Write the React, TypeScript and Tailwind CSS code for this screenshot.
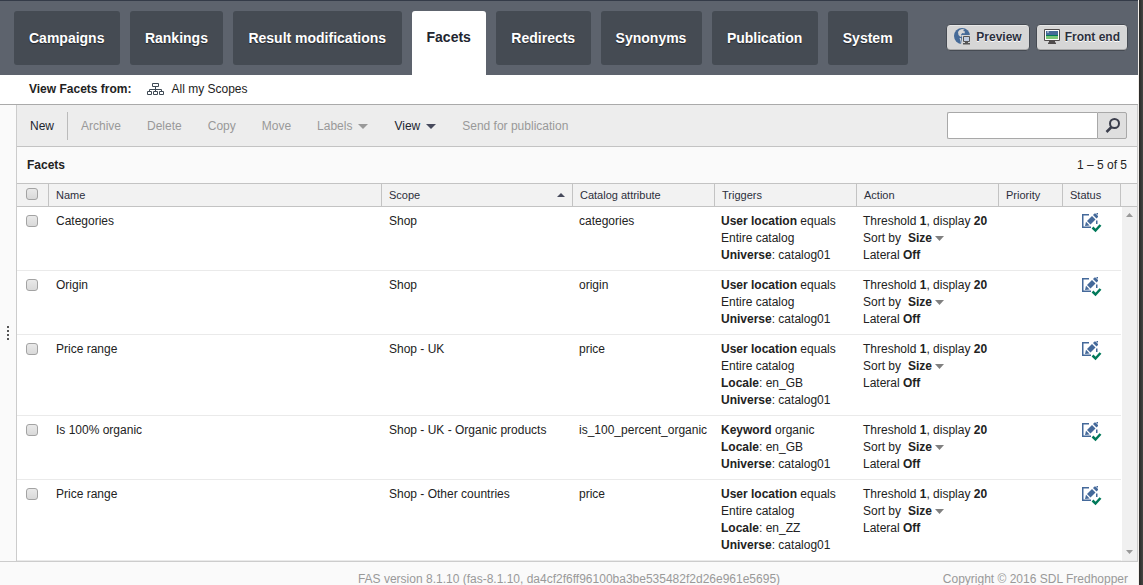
import React from "react";

const tabs = [
  "Campaigns",
  "Rankings",
  "Result modifications",
  "Facets",
  "Redirects",
  "Synonyms",
  "Publication",
  "System",
];

type Trigger = { bold?: string; text: string };
type Facet = { name: string; scope: string; attribute: string; triggers: Trigger[] };

const location: Trigger[] = [{ bold: "User location", text: " equals" }, { text: "Entire catalog" }];
const universe: Trigger = { bold: "Universe", text: ": catalog01" };

const facets: Facet[] = [
  { name: "Categories", scope: "Shop", attribute: "categories", triggers: [...location, universe] },
  { name: "Origin", scope: "Shop", attribute: "origin", triggers: [...location, universe] },
  {
    name: "Price range",
    scope: "Shop - UK",
    attribute: "price",
    triggers: [...location, { bold: "Locale", text: ": en_GB" }, universe],
  },
  {
    name: "Is 100% organic",
    scope: "Shop - UK - Organic products",
    attribute: "is_100_percent_organic",
    triggers: [{ bold: "Keyword", text: " organic" }, { bold: "Locale", text: ": en_GB" }, universe],
  },
  {
    name: "Price range",
    scope: "Shop - Other countries",
    attribute: "price",
    triggers: [...location, { bold: "Locale", text: ": en_ZZ" }, universe],
  },
];

function Triangle({ className, up = false }: { className: string; up?: boolean }) {
  return (
    <svg viewBox="0 0 10 5" preserveAspectRatio="none" className={className} aria-hidden="true">
      <path d={up ? "M0 5 5 0l5 5z" : "M0 0h10L5 5z"} fill="currentColor" />
    </svg>
  );
}

function ScopeIcon() {
  return (
    <svg width="17" height="13" viewBox="0 0 17 13" fill="none" stroke="#3f4a55" aria-hidden="true">
      <path d="M5.5.5h6v3h-6zM.5 8.5h4v3h-4zM6.500 8.500h4v3h-4zM12.500 8.500h4v3h-4zM8.500 4v4M2.500 8V6.500h12V8" />
    </svg>
  );
}

function PreviewIcon() {
  return (
    <svg width="17" height="17" viewBox="0 0 17 17" className="mb-0.5" aria-hidden="true">
      <circle cx="8" cy="8" r="8" fill="#456a98" />
      <path d="M4 4 5.500 2 8 1l2.500.5L9 3l2 .5-.5 2L8.500 5 7 6.500 8 8 6.500 9 4.500 7z" fill="#d6d6d6" />
      <path d="M8 7h9v10H8z" fill="#d6d6d6" />
      <path d="M7 10H5.500l1 3 .5 3h1z" fill="#d6d6d6" />
      <path d="M9.500 8.500h6v5h-6z" fill="#bfcde2" stroke="#555" />
      <path d="M11 14h3v1h2v1.500H9V15h2z" fill="#555" />
    </svg>
  );
}

function MonitorIcon() {
  return (
    <svg width="16" height="16" viewBox="0 0 16 16" className="mb-0.5" aria-hidden="true">
      <path d="M.5.5h15v11H.5z" fill="#fff" stroke="#4f4b4b" />
      <path d="M2 2h12v4H2z" fill="#456a98" />
      <path d="M3 2.500h2v1H3z" fill="#dfe6ee" />
      <path d="M2 6h12v1H2z" fill="#00795a" />
      <path d="M2 7h12v3H2z" fill="#7cc576" />
      <path d="M5 12h6v1.500h1V15H4v-1.500h1z" fill="#4f4b4b" />
    </svg>
  );
}

function StatusIcon() {
  return (
    <svg width="20" height="20" viewBox="0 0 20 20" role="img" aria-label="Modified and published">
      <g fill="#44699a">
        <path d="M0 1h7v1.500H1.500v11H9V15H0z" />
        <path d="m5 8 5-5 3.500 3.500-5 5z" />
        <path d="M11 2 12.500.5h1L16 3v1l-1.500 1.500z" />
        <path d="m3 13 1-4.200 3.700 3.700z" />
        <path d="M14 7.500h1.500V11H14zM14.500 0H16v1.500h-1.500z" />
      </g>
      <path d="m10.500 14.500 3 3 5-5.500" fill="none" stroke="#00795a" strokeWidth="2.500" />
    </svg>
  );
}

function Checkbox({ label }: { label: string }) {
  return (
    <input
      type="checkbox"
      aria-label={label}
      className="block size-3 appearance-none rounded-[3px] border border-[#a3a3a3] bg-linear-to-b from-[#e9e9e9] to-[#d9d9d9] checked:bg-[#456a98]"
    />
  );
}

function ToolButton({ children, active = false }: { children: React.ReactNode; active?: boolean }) {
  return (
    <button
      type="button"
      className={
        active
          ? "flex items-center gap-1.5 px-[13px] pt-0.5 text-[#22252f]"
          : "flex items-center gap-1.5 px-[13px] pt-0.5 text-[#999]"
      }
    >
      {children}
    </button>
  );
}

function HeaderButton({ children }: { children: React.ReactNode }) {
  return (
    <button
      type="button"
      className="flex h-[27px] items-center gap-[5px] rounded-[4px] border border-[#464b53] bg-[#d6d6d6] px-[7px] font-bold text-[#2b2f3c] shadow-[inset_0_1px_0_#e8e8e8,inset_0_-1px_0_#aaa] [text-shadow:0_1px_0_#fff]"
    >
      {children}
    </button>
  );
}

const th = "border-r border-[#c3c3c3] px-[7px] text-left font-normal";
const td = "border-b border-[#eaeaea] py-1.5 align-top";

export default function App() {
  return (
    <div className="flex min-h-screen bg-[#fafafa] font-['Liberation_Sans',Arial,sans-serif] text-[12px] leading-[17px] text-[#222]">
      <div className="flex min-w-0 flex-1 flex-col">
        <header className="flex h-[75px] justify-between border-t border-[#343b48] bg-[#5d636d] pt-2.5 pr-2.5 pl-3.5">
          <nav className="flex w-[894px] items-start gap-2.5 text-[14px] font-bold">
            {tabs.map((tab) =>
              tab === "Facets" ? (
                <a key={tab} href="#facets" aria-current="page" className="flex grow items-center self-stretch rounded-t-[3px] bg-white px-[15px] pb-3 text-[#22252f]">
                  {tab}
                </a>
              ) : (
                <a key={tab} href={"#" + tab.toLowerCase()} className="flex h-[54px] grow items-center rounded-[3px] bg-[#454b53] px-[15px] whitespace-nowrap text-white [text-shadow:0_1px_1px_#22252b]">
                  {tab}
                </a>
              ),
            )}
          </nav>
          <div className="flex items-start gap-1.5 pt-[13px] whitespace-nowrap">
            <HeaderButton>
              <PreviewIcon />
              Preview
            </HeaderButton>
            <HeaderButton>
              <MonitorIcon />
              Front end
            </HeaderButton>
          </div>
        </header>

        <div className="flex h-[30px] items-center gap-4 border-b border-[#aaa] bg-white pl-[29px]">
          <strong>View Facets from:</strong>
          <a href="#scopes" className="flex items-center gap-[7px]">
            <ScopeIcon />
            All my Scopes
          </a>
        </div>

        <div className="flex flex-1">
          <aside className="flex w-[17px] flex-col items-center justify-center gap-0.5 border-r border-[#ccc]">
            <span className="size-0.5 bg-[#555]" />
            <span className="size-0.5 bg-[#555]" />
            <span className="size-0.5 bg-[#555]" />
            <span className="size-0.5 bg-[#555]" />
          </aside>

          <main className="flex min-w-0 flex-1 flex-col border-r border-[#ccc]">
            <div className="flex h-[42px] items-center justify-between border-b border-[#c3c3c3] bg-[#ededed] pr-2.5">
              <div className="flex items-center">
                <div className="flex h-7 items-center border-r border-[#bbb]">
                  <ToolButton active>New</ToolButton>
                </div>
                <ToolButton>Archive</ToolButton>
                <ToolButton>Delete</ToolButton>
                <ToolButton>Copy</ToolButton>
                <ToolButton>Move</ToolButton>
                <ToolButton>
                  Labels
                  <Triangle className="h-[5px] w-2.5" />
                </ToolButton>
                <ToolButton active>
                  View
                  <Triangle className="h-[5px] w-2.5 text-[#474a5c]" />
                </ToolButton>
                <ToolButton>Send for publication</ToolButton>
              </div>
              <form className="flex h-[27px]" onSubmit={(e) => e.preventDefault()}>
                <input type="search" aria-label="Search facets" className="w-[150px] rounded-l-[2px] border border-r-0 border-[#a8a8a8] bg-white px-1.5 outline-none" />
                <button type="submit" aria-label="Search" className="flex w-[30px] items-center justify-center rounded-r-[2px] border border-[#a8a8a8] bg-[#dfdfdf]">
                  <svg width="15" height="15" viewBox="0 0 15 15" fill="none" stroke="#3b3e4c" aria-hidden="true">
                    <circle cx="9.500" cy="5.500" r="4.500" strokeWidth="2" />
                    <path d="m6.500 9-5 5" strokeWidth="2.500" />
                  </svg>
                </button>
              </form>
            </div>

            <div className="flex h-9 items-center justify-between pr-2.5 pl-2.5">
              <h1 className="font-bold">Facets</h1>
              <span>1 – 5 of 5</span>
            </div>

            <table className="w-full flex-1 table-fixed border-separate border-spacing-0 bg-white">
              <colgroup>
                <col className="w-8" />
                <col />
                <col className="w-[191px]" />
                <col className="w-[142px]" />
                <col className="w-[142px]" />
                <col className="w-[142px]" />
                <col className="w-16" />
                <col className="w-[58px]" />
                <col className="w-4" />
              </colgroup>
              <thead className="bg-[#f2f2f2] text-[11px] leading-[22px] text-[#2c2f3c] [&_th]:border-y [&_th]:border-y-[#c3c3c3]">
                <tr>
                  <th className="border-r border-[#c3c3c3] pt-1 pl-[9px] align-top">
                    <Checkbox label="Select all facets" />
                  </th>
                  <th className={th}>Name</th>
                  <th className={th}>
                    <span className="flex items-center justify-between">
                      Scope
                      <Triangle up className="h-1 w-2 text-[#474a5c]" />
                    </span>
                  </th>
                  <th className={th}>Catalog attribute</th>
                  <th className={th}>Triggers</th>
                  <th className={th}>Action</th>
                  <th className={th}>Priority</th>
                  <th className={th}>Status</th>
                  <th aria-hidden="true" />
                </tr>
              </thead>
              <tbody>
                {facets.map((facet, i) => (
                  <tr key={i}>
                    <td className={td + " pl-[9px]"}>
                      <div className="flex h-4 items-center">
                        <Checkbox label={"Select " + facet.name} />
                      </div>
                    </td>
                    <td className={td + " px-[7px]"}>{facet.name}</td>
                    <td className={td + " px-[7px]"}>{facet.scope}</td>
                    <td className={td + " pl-1.5"}>{facet.attribute}</td>
                    <td className={td + " pl-1.5"}>
                      {facet.triggers.map((t, n) => (
                        <div key={n}>
                          {t.bold && <b>{t.bold}</b>}
                          {t.text}
                        </div>
                      ))}
                    </td>
                    <td className={td + " pl-1.5"}>
                      <div>
                        Threshold <b>1</b>, display <b>20</b>
                      </div>
                      <label className="flex items-center">
                        Sort by
                        <select className="ml-[7px] field-sizing-content h-[17px] appearance-none bg-transparent font-bold">
                          <option>Size</option>
                        </select>
                        <Triangle className="ml-[3px] h-[5px] w-[9px] text-[#808080]" />
                      </label>
                      <div>
                        Lateral <b>Off</b>
                      </div>
                    </td>
                    <td className={td} />
                    <td className={td}>
                      <div className="flex h-5 items-center justify-center">
                        <StatusIcon />
                      </div>
                    </td>
                    {i === 0 && (
                      <td rowSpan={facets.length} className="relative border-b border-l border-b-[#eaeaea] border-l-white bg-[#f0f0f0] text-[#999]">
                        <button type="button" aria-label="Scroll up" className="absolute inset-x-0 top-1.5 flex justify-center">
                          <Triangle up className="h-1 w-[7px]" />
                        </button>
                        <button type="button" aria-label="Scroll down" className="absolute inset-x-0 bottom-1.5 flex justify-center">
                          <Triangle className="h-1 w-[7px]" />
                        </button>
                      </td>
                    )}
                  </tr>
                ))}
              </tbody>
            </table>
          </main>
        </div>

        <footer className="grid grid-cols-[1fr_auto_1fr] border-t border-[#ccc] pt-[11px] leading-[12px] text-[#999]">
          <span />
          <span>FAS version 8.1.10 (fas-8.1.10, da4cf2f6ff96100ba3be535482f2d26e961e5695)</span>
          <span className="pr-2.5 text-right">Copyright © 2016 SDL Fredhopper</span>
        </footer>
      </div>
      <div className="w-[5px] border-l border-[#f3efeb] bg-linear-to-r from-[#292927] to-[#454543]" />
    </div>
  );
}
